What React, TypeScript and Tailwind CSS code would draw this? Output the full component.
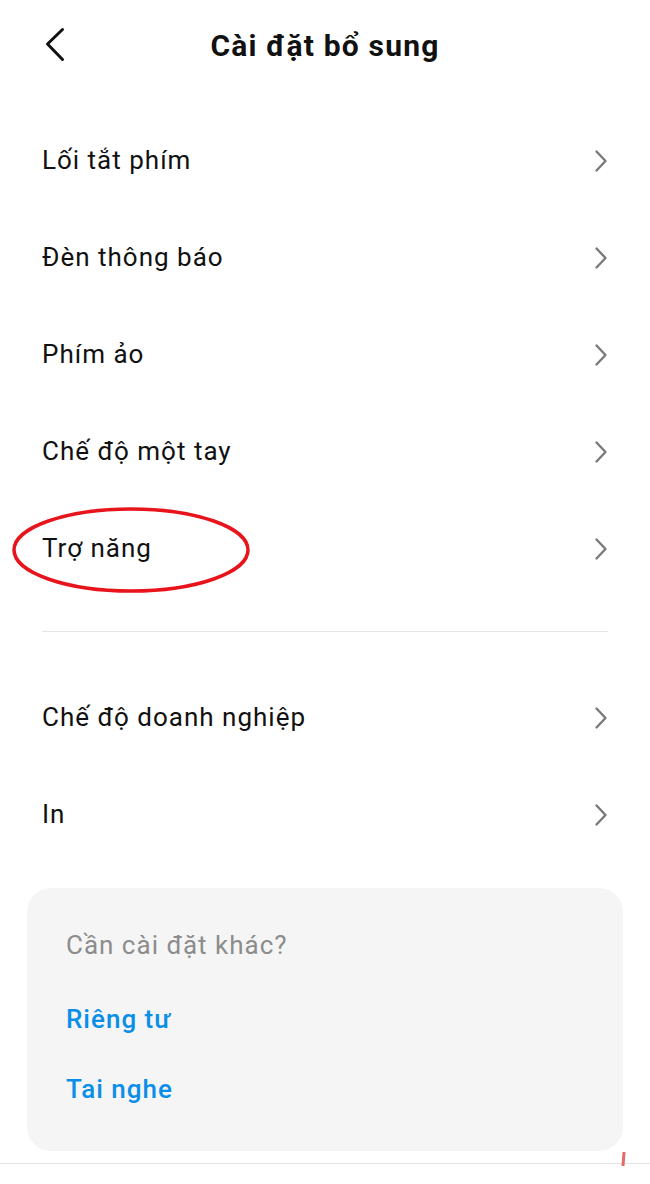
const groupOne = ["Lối tắt phím", "Đèn thông báo", "Phím ảo", "Chế độ một tay", "Trợ năng"];
const groupTwo = ["Chế độ doanh nghiệp", "In"];

function Chevron() {
  return (
    <svg width="14" height="24" viewBox="0 0 14 24" className="shrink-0">
      <path d="M2.5 2.5 L11.5 12 L2.5 21.5" fill="none" stroke="#7a7a7a" strokeWidth="2.4" strokeLinecap="round" strokeLinejoin="round" />
    </svg>
  );
}

function Row({ label }: { label: string }) {
  return (
    <div className="flex h-[97px] items-center justify-between pl-[42px] pr-[42px]">
      <span className="text-[26px] tracking-[1px] text-[#111]">{label}</span>
      <Chevron />
    </div>
  );
}

export default function App() {
  return (
    <div
      className="relative min-h-[1184px] w-[650px] overflow-hidden bg-white"
      style={{ fontFamily: "Roboto, 'Noto Sans', sans-serif" }}
    >
      {/* Header */}
      <div className="relative flex h-[90px] items-center justify-center">
        <svg className="absolute left-[42px] top-[26px]" width="26" height="38" viewBox="0 0 26 38">
          <path d="M20.5 3.5 L5.5 18 L20.5 33.5" fill="none" stroke="#111" strokeWidth="3" strokeLinecap="round" strokeLinejoin="round" />
        </svg>
        <h1 className="text-[30px] font-bold tracking-[1.2px] text-[#111]">Cài đặt bổ sung</h1>
      </div>

      <div className="mt-[22px]">
        {groupOne.map((l) => (
          <Row key={l} label={l} />
        ))}
      </div>

      <div className="mx-[42px] mt-[34px] h-px bg-[#e5e5e5]" />

      <div className="mt-[37px]">
        {groupTwo.map((l) => (
          <Row key={l} label={l} />
        ))}
      </div>

      {/* Other settings card */}
      <div className="mx-[27px] mt-[25px] h-[263px] rounded-[24px] bg-[#f5f5f5] px-[39px] pt-[38px]">
        <p className="text-[26px] leading-[38px] tracking-[1px] text-[#8c8c8c]">Cần cài đặt khác?</p>
        <p className="mt-[36px] text-[26px] font-medium leading-[38px] tracking-[1px] text-[#0a8fe8]">Riêng tư</p>
        <p className="mt-[32px] text-[26px] font-medium leading-[38px] tracking-[1px] text-[#0a8fe8]">Tai nghe</p>
      </div>

      <div className="mt-[12px] h-px bg-[#e2e2e2]" />

      {/* Annotation */}
      <svg className="pointer-events-none absolute left-0 top-0" width="650" height="1184">
        <ellipse cx="131" cy="550" rx="117" ry="41" fill="none" stroke="#e8141c" strokeWidth="3.5" />
        <path d="M624 1152 L623 1166" stroke="#e46a6a" strokeWidth="3" />
      </svg>
    </div>
  );
}
